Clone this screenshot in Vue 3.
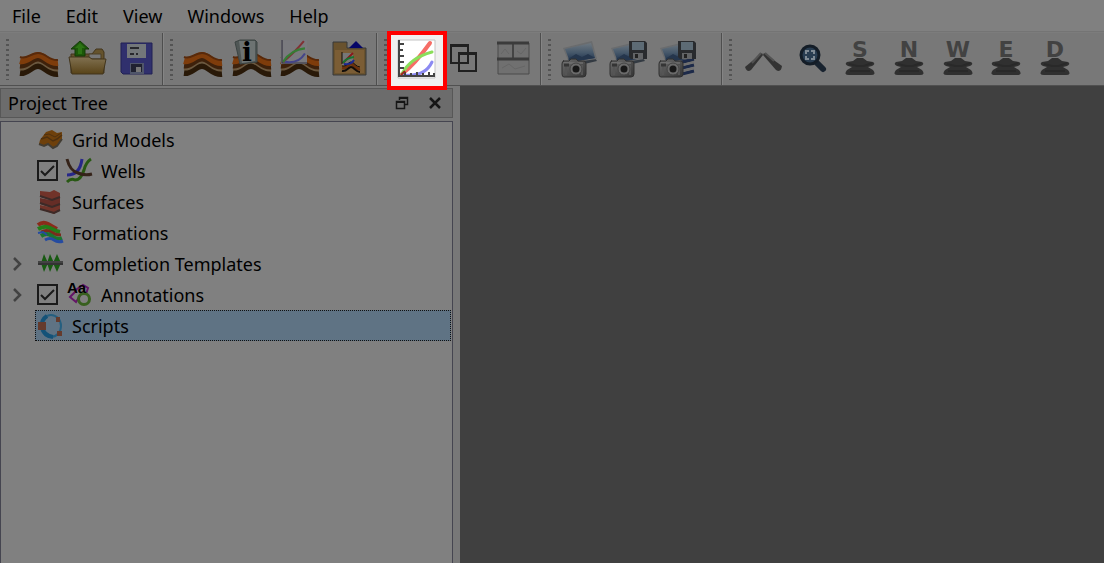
<script setup>
import { ref } from 'vue'

const menus = ['File', 'Edit', 'View', 'Windows', 'Help']
const views = [
  { letter: 'S', name: 'South view' },
  { letter: 'N', name: 'North view' },
  { letter: 'W', name: 'West view' },
  { letter: 'E', name: 'East view' },
  { letter: 'D', name: 'View down' }
]
const snapshots = [
  { id: 'clipboard', name: 'Snapshot to clipboard' },
  { id: 'file', name: 'Snapshot to file' },
  { id: 'all', name: 'Snapshot all views' }
]
const nodes = ref([
  { id: 'grid', label: 'Grid Models' },
  { id: 'wells', label: 'Wells', checkable: true, checked: true },
  { id: 'surfaces', label: 'Surfaces' },
  { id: 'formations', label: 'Formations' },
  { id: 'completion', label: 'Completion Templates', children: true },
  { id: 'annotations', label: 'Annotations', checkable: true, checked: true, children: true },
  { id: 'scripts', label: 'Scripts' }
])
const selected = ref('scripts')
</script>

<template>
  <div class="window">
    <svg class="defs" aria-hidden="true">
      <defs>
        <linearGradient id="gold" x1="0" y1="0" x2="0" y2="1">
          <stop offset="0" stop-color="#817151" /><stop offset="1" stop-color="#584318" />
        </linearGradient>
        <linearGradient id="sky" x1="0" y1="0" x2="0" y2="1">
          <stop offset="0" stop-color="#6e7880" /><stop offset=".5" stop-color="#47596b" /><stop offset="1" stop-color="#192c49" />
        </linearGradient>
        <linearGradient id="metal" x1="0" y1="0" x2="1" y2="1">
          <stop offset="0" stop-color="#6c6c6c" /><stop offset="1" stop-color="#353535" />
        </linearGradient>
        <symbol id="strata" viewBox="0 0 40 40">
          <g fill="none">
            <path d="M1 34C9 35 12 27 19 27S29 36 39 35" stroke="#291908" stroke-width="6" />
            <path d="M1 30C9 31 12 23 19 23S29 32 39 31" stroke="#6b583f" stroke-width="3" />
            <path d="M1 27C9 28 12 20 19 20S29 29 39 28" stroke="#3e210b" stroke-width="5" />
            <path d="M1 22C8 24 12 16 19 16S29 25 39 24" stroke="#7e3c0b" stroke-width="6" />
            <path d="M1 18C8 21 11 14 19 14S30 22 39 21" stroke="#58290a" stroke-width="2" />
          </g>
        </symbol>
        <symbol id="minichart" viewBox="0 0 25 23">
          <path d="M0 0H25V23H0Z" fill="#7a7a7e" />
          <path d="M1 0V22H25" fill="none" stroke="#32313f" />
          <path d="M2 21Q12 13 22 1" fill="none" stroke="#803135" stroke-width="2" />
          <path d="M2 21Q10 9 23 8" fill="none" stroke="#367c34" stroke-width="2" />
          <path d="M4 21Q17 23 23 13" fill="none" stroke="#444489" stroke-width="2" />
        </symbol>
        <symbol id="camera" viewBox="0 0 40 40">
          <path d="M4 22H10L12 20H17L19 22H25Q27 22 27 25V35Q27 38 24 38H5Q3 38 3 35V25Q3 22 5 22Z" fill="url(#metal)" stroke="#303030" />
          <path d="M5 24H24" stroke="#7c7c7c" />
          <path d="M7 26V36M23 26V36" stroke="#555" stroke-width="2" />
          <circle cx="17" cy="30" r="6" fill="#6a6a6a" stroke="#454545" />
          <circle cx="17" cy="30" r="3.5" fill="#181818" />
          <path d="M5 26H10" stroke="#353535" stroke-width="3" />
        </symbol>
        <symbol id="disk" viewBox="0 0 18 18">
          <path d="M0 0H16L18 2V18H2L0 16Z" fill="#292b2e" />
          <path d="M3 1H15V9H3Z" fill="#5d6b75" />
          <path d="M4 12H14V18H4Z" fill="#626466" /><path d="M6 13H9V17H6Z" fill="#222" />
        </symbol>
        <symbol id="stack" viewBox="0 0 40 40">
          <path d="M17 19H23L27 22L33 23Q36 25 32 27L28 28L33 31Q37 36 31 36H9Q3 36 7 31L12 28L8 27Q4 25 7 23L13 22Z" fill="#303030" />
          <path d="M9 25L17 27H24L32 24M10 32H30" fill="none" stroke="#292929" stroke-width="2" />
        </symbol>
      </defs>
    </svg>

    <nav class="menubar">
      <button v-for="m in menus" :key="m" type="button">{{ m }}</button>
    </nav>

    <div class="toolbars">
      <div class="group project">
        <div class="tools">
          <button type="button" aria-label="Import model">
            <svg viewBox="0 0 40 40"><use href="#strata" /></svg>
          </button>
          <button type="button" aria-label="Open project">
            <svg viewBox="0 0 40 40">
              <path d="M4 34V15H25L29 10H35L37 13V34Z" fill="#65532d" stroke="#42351c" />
              <path d="M22 15H34V20H22Z" fill="#777" stroke="#4c4029" />
              <path d="M2 18H22L25 20H39L36 35H5Z" fill="url(#gold)" stroke="#42351c" />
              <path d="M13 2L22 10H18V17H8V10H4Z" fill="#1c5809" stroke="#143b09" />
              <path d="M13 4L18 9H15V15H11V9H8Z" fill="#2c7414" />
            </svg>
          </button>
          <button type="button" aria-label="Save project">
            <svg viewBox="0 0 40 40">
              <path d="M5 4H36V35H7L5 33Z" fill="#30306d" stroke="#202054" />
              <path d="M11 5H30V19H11Z" fill="#73777a" />
              <path d="M14 9H23M14 15H18M20 15H22" stroke="#28282d" stroke-width="2" />
              <path d="M14 24H28V35H14Z" fill="#50566a" />
              <path d="M15 25H26V33H15Z" fill="#202130" /><path d="M20 28H25V33H20Z" fill="#777" />
            </svg>
          </button>
        </div>
      </div>

      <div class="group cases">
        <div class="tools">
          <button type="button" aria-label="Import grid">
            <svg viewBox="0 0 40 40"><use href="#strata" /></svg>
          </button>
          <button type="button" aria-label="Model information">
            <svg viewBox="0 0 40 40">
              <use href="#strata" />
              <path d="M3 3L8 1H23L25 3V23L8 25Z" fill="#4f5655" stroke="#3c4443" />
              <path d="M7 2H23V22L10 24Z" fill="#6d7372" />
              <text x="15" y="22" text-anchor="middle" font-family="DejaVu Serif, serif" font-weight="bold" font-size="26" fill="#000">i</text>
            </svg>
          </button>
          <button type="button" aria-label="Import summary">
            <svg viewBox="0 0 40 40">
              <use href="#strata" /><use href="#minichart" x="1" y="1" width="26" height="24" />
            </svg>
          </button>
          <button type="button" aria-label="Open summary folder">
            <svg viewBox="0 0 40 40">
              <path d="M4 3H18V9H37V36H4Z" fill="#69522e" stroke="#37393a" />
              <path d="M6 11H35V34H6Z" fill="#7b5d35" />
              <path d="M20 9L27 2L34 9Z" fill="#050567" />
              <path d="M13 14H24V26H13Z" fill="#777" />
              <path d="M13 29C18 30 19 25 22 25S27 31 31 30" fill="none" stroke="#6b300b" stroke-width="3" />
              <path d="M13 32C18 33 19 28 22 28S27 33 31 33" fill="none" stroke="#120d09" stroke-width="2" />
              <path d="M13 27C18 28 19 23 22 23S27 28 31 28" fill="none" stroke="#120d09" />
              <path d="M14 24L24 14" stroke="#8b1719" stroke-width="2" />
              <path d="M14 24Q17 19 25 18" fill="none" stroke="#167430" stroke-width="2" />
              <path d="M15 25Q22 26 25 21" fill="none" stroke="#1b2791" stroke-width="2" />
              <path d="M13 13V25" stroke="#120d09" />
            </svg>
          </button>
        </div>
      </div>

      <div class="group plots">
        <div class="tools">
          <button type="button" class="highlight" aria-label="Open plot window">
            <svg viewBox="0 0 40 40">
              <path d="M2 1H39V39H2Z" fill="#fff" stroke="#c4c4c4" />
              <g fill="none" stroke-linecap="round">
                <path d="M6 35Q19 25 34 4" stroke="#f66d66" stroke-width="4" />
                <path d="M6 35Q14 19 36 13" stroke="#8ade5a" stroke-width="3" />
                <path d="M8 36Q29 38 36 23" stroke="#8c8af2" stroke-width="3" />
              </g>
              <path d="M3 1V37H39M3 5H8M3 11H7M3 17H8M3 23H8M3 29H8M9 37V33M15 37V34M21 37V33M27 37V34M33 37V33M38 37V34" fill="none" stroke="#444" stroke-width="2" />
              <path d="M5 36L9 32" stroke="#9d261d" stroke-width="2" />
            </svg>
          </button>
          <button type="button" aria-label="Cascade windows">
            <svg viewBox="0 0 40 40">
              <g fill="none" stroke="#202020" stroke-width="2">
                <path d="M7 6H24V24H7ZM15 14H32V32H15Z" /><path d="M6 7H25M14 15H33" />
              </g>
            </svg>
          </button>
          <button type="button" aria-label="Tile windows">
            <svg viewBox="0 0 40 40">
              <path d="M5 4H36V35H5Z" fill="#707070" stroke="#4a4a4a" />
              <path d="M20 5V19" stroke="#444" stroke-width="2" />
              <path d="M4 4H36M4 20H36" stroke="#3b3b3b" stroke-width="3" />
              <path d="M8 15L12 10L16 15M24 12L28 15L33 9M9 29L16 25L22 30L32 27" fill="none" stroke="#666" />
            </svg>
          </button>
        </div>
      </div>

      <div class="group snapshots">
        <div class="tools">
          <button v-for="s in snapshots" :key="s.id" type="button" :aria-label="s.name">
            <svg viewBox="0 0 40 40">
              <path d="M10 24L36 19L38 22L17 27Z" fill="#333a42" />
              <path d="M4 9L33 2L38 20L10 24Z" fill="#6a6c6e" />
              <path d="M6 10L32 4L36 19L11 23Z" fill="url(#sky)" />
              <path d="M9 20L17 15L23 18L29 15L36 19L12 23Z" fill="#25364d" />
              <path v-if="s.id === 'all'" d="M22 24L38 20M22 30L38 26M22 36L38 32" stroke="#1d2a49" stroke-width="3" />
              <path v-if="s.id === 'all'" d="M22 27L38 23M22 33L38 29" stroke="#707070" stroke-width="2" />
              <use v-if="s.id !== 'clipboard'" href="#disk" x="22" y="2" width="18" height="18" />
              <use href="#camera" />
            </svg>
          </button>
        </div>
      </div>

      <div class="group view">
        <div class="tools">
          <button type="button" aria-label="Perspective">
            <svg viewBox="0 0 40 40">
              <path d="M19 14L20 16L8 31Q4 34 2 28Z" fill="#333" />
              <path d="M21 14L20 16L33 31Q38 34 39 27Z" fill="#333" />
              <path d="M18 14L9 24M22 14L31 22" stroke="#525252" stroke-width="2" />
            </svg>
          </button>
          <button type="button" aria-label="Zoom all">
            <svg viewBox="0 0 40 40">
              <path d="M24 23L31 30" stroke="#18232f" stroke-width="6" stroke-linecap="round" />
              <circle cx="18" cy="16" r="9" fill="#293d51" stroke="#141d27" stroke-width="3" />
              <path d="M14 15V12H17M19 12H22V15M22 17V20H19M17 20H14V17" fill="none" stroke="#7f8a94" stroke-width="2" />
            </svg>
          </button>
          <button v-for="v in views" :key="v.letter" type="button" :aria-label="v.name">
            <svg viewBox="0 0 40 40">
              <text x="20" y="18" text-anchor="middle" font-family="DejaVu Sans, sans-serif" font-weight="bold" font-size="22" fill="#424242">{{ v.letter }}</text>
              <use href="#stack" />
            </svg>
          </button>
        </div>
      </div>
    </div>

    <div class="workspace">
      <aside class="dock">
        <header class="dock-title">
          <h2>Project Tree</h2>
          <button type="button" aria-label="Float panel">
            <svg viewBox="0 0 16 16">
              <g fill="none" stroke="#161616">
                <path d="M5.5 5V2.5H13.5V9.5H11M2.5 6.5H10.5V13.5H2.5Z" stroke-width="1.5" />
                <path d="M5 3H14M2 7H11" stroke-width="2" />
              </g>
            </svg>
          </button>
          <button type="button" aria-label="Close panel">
            <svg viewBox="0 0 16 16"><path d="M3 3L13 13M13 3L3 13" stroke="#161616" stroke-width="2.5" /></svg>
          </button>
        </header>

        <ul class="tree">
          <li v-for="n in nodes" :key="n.id" @click="selected = n.id">
            <button v-if="n.children" type="button" class="expander" :aria-label="'Expand ' + n.label">
              <svg viewBox="0 0 12 16"><path d="M3 2L9 8L3 14" fill="none" stroke="#424242" stroke-width="2.5" /></svg>
            </button>
            <span v-else class="expander"></span>
            <div class="node" :class="{ selected: selected === n.id }">
              <span v-if="n.checkable" class="tick">
                <input :id="'show-' + n.id" v-model="n.checked" type="checkbox" />
                <svg v-if="n.checked" viewBox="0 0 21 21"><path d="M4 11L8 15L17 6" fill="none" stroke="#1a1a1a" stroke-width="2" /></svg>
              </span>
              <svg class="glyph" viewBox="0 0 26 26">
                <g v-if="n.id === 'grid'">
                  <path d="M3 13L9 5L15 3L20 6L25 5V12L20 19L16 21L11 17L7 19L2 17Z" fill="#6e400b" />
                  <path d="M4 12L10 10L16 14L20 12L25 8" fill="none" stroke="#4e300f" stroke-width="1.5" />
                  <path d="M7 8L12 7L18 10L24 6" fill="none" stroke="#4e300f" />
                  <path d="M2 17L7 19L11 17L16 21L20 19L25 12" fill="none" stroke="#423c32" stroke-width="2" />
                </g>
                <g v-else-if="n.id === 'wells'" fill="none" stroke-width="3">
                  <path d="M1 17Q14 17 16 1" stroke="#27278a" />
                  <path d="M1 24Q5 20 9 22Q15 22 18 12Q20 4 25 1" stroke="#285813" />
                  <path d="M1 1Q4 13 12 15Q19 18 26 16" stroke="#352319" />
                </g>
                <g v-else-if="n.id === 'surfaces'">
                  <path d="M3 2L13 3L17 1L23 4V9L15 11L3 8Z" fill="#713329" />
                  <path d="M3 9L13 11L23 8V16L15 19L3 15Z" fill="#652d26" />
                  <path d="M3 16L13 18L23 15V21L17 25L3 20Z" fill="#713329" />
                  <path d="M3 7L15 11L23 8M3 14L15 18L23 15M3 20L17 24L23 21" fill="none" stroke="#3c2a27" stroke-width="2" />
                </g>
                <g v-else-if="n.id === 'formations'" fill="none">
                  <path d="M1 5Q6 1 11 4T20 9" stroke="#8a2b1b" stroke-width="4" />
                  <path d="M1 9Q8 5 13 8T23 12" stroke="#247b18" stroke-width="4" />
                  <path d="M4 12Q10 9 14 12T24 15" stroke="#7a2c1b" stroke-width="3" />
                  <path d="M4 16Q10 12 15 16T25 18" stroke="#1b7430" stroke-width="4" />
                  <path d="M8 20Q13 17 17 20T26 21" stroke="#254ba1" stroke-width="3" />
                  <path d="M1 13L6 12L10 15" stroke="#254ba1" stroke-width="2" />
                </g>
                <g v-else-if="n.id === 'completion'">
                  <path d="M7 3L11 12L7 21L4 12ZM13 3L17 12L13 21L10 12ZM20 3L24 12L20 21L16 12Z" fill="#185a12" />
                  <path d="M1 10H26V14H1Z" fill="#333" /><path d="M1 11H26" stroke="#555" />
                </g>
                <g v-else-if="n.id === 'annotations'">
                  <path d="M11 7L17 3L22 6L20 12L15 12L10 20L4 15L8 11Z" fill="none" stroke="#641568" stroke-width="2" />
                  <circle cx="18" cy="17" r="5.5" fill="none" stroke="#38601f" stroke-width="3" />
                  <text x="1" y="11" font-family="Liberation Sans, sans-serif" font-weight="bold" font-size="15" fill="#000">Aa</text>
                </g>
                <g v-else>
                  <ellipse cx="14" cy="13" rx="10" ry="11" fill="none" stroke="#245f80" stroke-width="2" />
                  <path d="M10 3Q4 7 5 14Q7 23 16 24" fill="none" stroke="#145278" stroke-width="4" />
                  <path d="M1 9H9V17H1ZM19 4H23V9H19ZM20 18H25V23H20Z" fill="#653b2d" />
                </g>
              </svg>
              <label v-if="n.checkable" :for="'show-' + n.id">{{ n.label }}</label>
              <span v-else>{{ n.label }}</span>
            </div>
          </li>
        </ul>
      </aside>
      <main class="canvas"></main>
    </div>
  </div>
</template>

<style>
body {
  margin: 0;
}
</style>

<style scoped>
.window {
  display: flex;
  flex-direction: column;
  min-height: 100vh;
  background: #787878;
  color: #000;
  font-family: "Noto Sans", "Open Sans", sans-serif;
  font-size: 18px;
  line-height: 24px;
}
.defs {
  position: absolute;
  width: 0;
  height: 0;
}
button {
  margin: 0;
  padding: 0;
  border: 0;
  background: none;
  color: inherit;
  font: inherit;
}
svg {
  display: block;
  flex: none;
  overflow: visible;
}
.menubar {
  display: flex;
  gap: 1px;
  padding: 4px 0 3px;
  background: #808080;
  border-bottom: 1px solid #747474;
}
.menubar button {
  padding: 0 12px;
}
.toolbars {
  display: flex;
  height: 52px;
  border-top: 1px solid #7c7c7c;
  border-bottom: 1px solid #505050;
}
.group {
  box-sizing: border-box;
  display: flex;
  align-items: center;
  flex: none;
  position: relative;
  border-right: 1px solid #858585;
  box-shadow: inset -1px 0 #4e4e4e;
}
.group::before {
  content: "";
  position: absolute;
  left: 6px;
  top: 6px;
  bottom: 5px;
  width: 3px;
  background: repeating-linear-gradient(to bottom, #545454 0 2px, #787878 2px 5px);
}
.tools {
  display: flex;
  flex: 1;
}
.tools button {
  display: flex;
  justify-content: center;
  flex: 1;
}
.tools svg {
  width: 40px;
  height: 40px;
}
.project {
  width: 164px;
  padding: 0 3px 0 15px;
}
.cases {
  width: 214px;
  padding: 0 4px 0 15px;
}
.plots {
  width: 164px;
  padding: 0 4px 0 14px;
}
.snapshots {
  width: 181px;
  padding: 0 22px 0 13px;
}
.view {
  flex: 1;
  padding-left: 16px;
  border-right: 0;
  box-shadow: none;
}
.view .tools {
  flex: 0 1 340px;
}
.highlight {
  position: relative;
}
.highlight::before {
  content: "";
  position: absolute;
  inset: -8px -7px -11px -5px;
  border: 4px solid #f00;
  background: #f0f0f0;
  z-index: 1;
}
.highlight svg {
  position: relative;
  z-index: 2;
}
.workspace {
  display: flex;
  flex: 1;
}
.dock {
  display: flex;
  flex-direction: column;
  flex: none;
  box-sizing: border-box;
  width: 460px;
  padding: 2px 7px 0 0;
}
.dock-title {
  display: flex;
  align-items: center;
  gap: 17px;
  height: 28px;
  margin-bottom: 3px;
  padding: 0 9px 0 7px;
  border: 1px solid #575757;
  background: #6c6c6c;
}
.dock-title h2 {
  flex: 1;
  margin: 0;
  font-size: inherit;
  font-weight: normal;
}
.dock-title svg {
  width: 16px;
  height: 16px;
}
.tree {
  flex: 1;
  margin: 0;
  padding: 2px 1px 0 0;
  list-style: none;
  border: 1px solid #454550;
  border-bottom: 0;
  background: #808080;
}
.tree li {
  display: flex;
  align-items: center;
  height: 31px;
}
.expander {
  display: flex;
  justify-content: center;
  width: 32px;
}
.expander svg {
  width: 12px;
  height: 16px;
}
.node {
  box-sizing: border-box;
  display: flex;
  align-items: center;
  flex: 1;
  height: 31px;
  margin-left: 2px;
  border: 1px dotted transparent;
  padding-left: 1px;
}
.selected {
  background: #5f7384;
  border-color: #101010;
}
.glyph {
  width: 26px;
  height: 26px;
  margin-right: 9px;
}
.tick {
  position: relative;
  margin-right: 8px;
}
.tick input {
  appearance: none;
  box-sizing: border-box;
  display: block;
  width: 21px;
  height: 21px;
  margin: 0;
  border: 2px solid #1a1a1a;
}
.tick svg {
  position: absolute;
  inset: 0;
  pointer-events: none;
}
.canvas {
  flex: 1;
  background: #404040;
}
</style>
